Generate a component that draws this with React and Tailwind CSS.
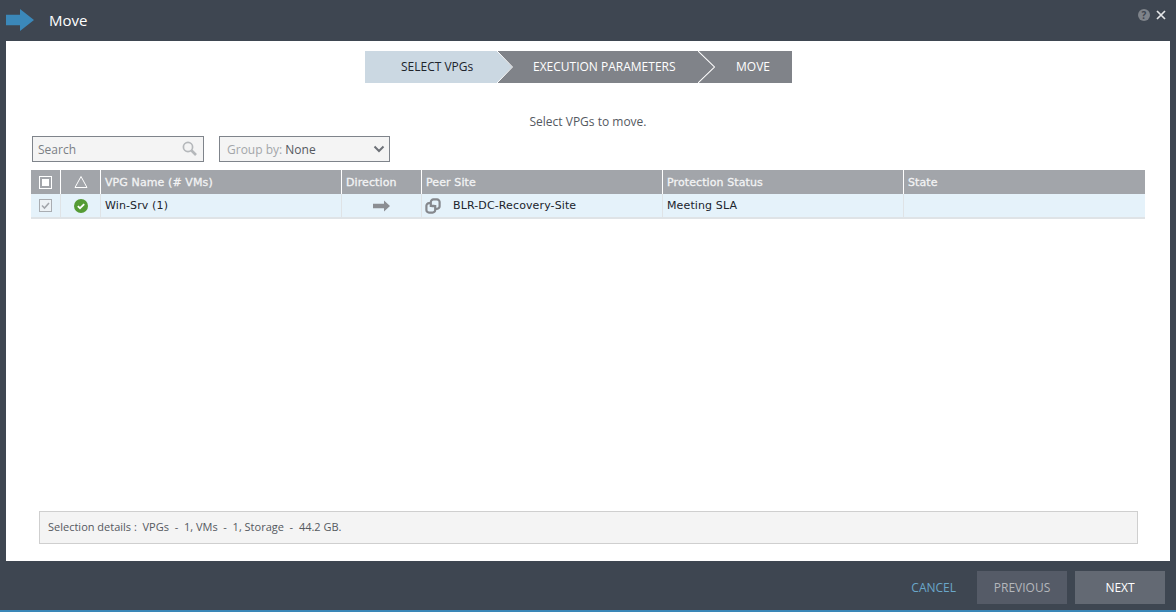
const headerCell = 'flex items-center border-l border-white pl-[4px] pt-[3px] text-[11px] tracking-[0.1px] text-[#f2f3f4] [-webkit-text-stroke:0.3px_#f2f3f4]'
const rowCell = 'flex items-center border-l border-[#dfe3e6] pl-[4px] pt-[2px] text-[11px] tracking-[0.12px] text-[#20242c]'
const columns = 'grid-cols-[29px_40px_241px_80px_241px_241px_242px]'

function StepChevron({ className, fill }) {
  return (
    <svg className={className} viewBox="0 0 16 32" preserveAspectRatio="none">
      {fill && <path d="M0 0L15 16L0 32Z" fill={fill} />}
      <path d="M0 0L15.5 16L0 32" fill="none" stroke="#fff" strokeWidth="1" />
    </svg>
  )
}

function Wizard() {
  return (
    <div className="ml-[359px] mt-[10px] flex h-8 w-[427px] font-['Open_Sans',sans-serif] text-xs">
      <div className="relative flex w-[132px] items-center bg-[#cbd8e2] pl-9 text-[#20242c]">
        SELECT VPGs
      </div>
      <div className="relative flex w-[201px] items-center bg-[#808389] pl-9 text-white">
        <StepChevron className="absolute left-0 top-0 h-8 w-4" fill="#cbd8e2" />
        EXECUTION PARAMETERS
      </div>
      <div className="relative flex flex-1 items-center bg-[#808389] pl-[38px] text-white">
        <StepChevron className="absolute left-0 top-0 h-8 w-[17px]" />
        MOVE
      </div>
    </div>
  )
}

function Toolbar() {
  return (
    <div className="ml-[26px] mt-[6px] flex gap-[15px] font-['Open_Sans',sans-serif] text-xs">
      <div className="flex h-[26px] w-[172px] items-center justify-between border border-[#7f848b] bg-[#f4f4f4] pl-[5px] pr-[6px] text-[#7b7f85]">
        <span className="pt-[1px]">Search</span>
        <svg className="mb-[2px] h-[15px] w-[15px]" viewBox="0 0 15 15">
          <circle cx="6" cy="6" r="4.6" fill="none" stroke="#b5b8bb" strokeWidth="1.7" />
          <path d="M9.5 9.5L14 14" fill="none" stroke="#b5b8bb" strokeWidth="2.6" />
        </svg>
      </div>
      <div className="flex h-[26px] w-[171px] items-center justify-between border border-[#7f848b] bg-[#f4f4f4] pl-[7px] pr-[4px] text-[#a3a6aa]">
        <span className="pt-[1px]">
          Group by: <span className="text-[#55595f]">None</span>
        </span>
        <svg className="h-2 w-3" viewBox="0 0 12 8">
          <path d="M1.5 1.5L6 6L10.5 1.5" fill="none" stroke="#6d7177" strokeWidth="2" />
        </svg>
      </div>
    </div>
  )
}

function VpgTable() {
  return (
    <div className="mx-[25px] mt-2 font-['DejaVu_Sans',sans-serif]">
      <div className={`grid h-6 bg-[#a2a5aa] ${columns}`}>
        <div className="flex items-center pl-2">
          <div className="flex h-[13px] w-[13px] items-center justify-center border-[1.5px] border-white">
            <div className="h-[7px] w-[7px] bg-white" />
          </div>
        </div>
        <div className="flex items-center justify-center border-l border-white">
          <svg className="h-[14px] w-[14px]" viewBox="0 0 14 14">
            <path d="M7 1.5L13 12.5H1Z" fill="none" stroke="#fff" strokeWidth="1" />
          </svg>
        </div>
        <div className={headerCell}>VPG Name (# VMs)</div>
        <div className={headerCell}>Direction</div>
        <div className={headerCell}>Peer Site</div>
        <div className={headerCell}>Protection Status</div>
        <div className={headerCell}>State</div>
      </div>
      <div className={`grid h-[25px] border-b-2 border-[#dfe3e6] bg-[#e5f2fa] ${columns}`}>
        <div className="flex items-center pl-2">
          <div className="flex h-[13px] w-[13px] items-center justify-center border border-[#a9adb2] bg-[#edf2f5]">
            <svg className="h-[9px] w-[9px]" viewBox="0 0 9 9">
              <path d="M1 4.5L3.5 7L8 2" fill="none" stroke="#a2a6ab" strokeWidth="1.6" />
            </svg>
          </div>
        </div>
        <div className="flex items-center justify-center border-l border-[#dfe3e6]">
          <svg className="h-[14px] w-[14px]" viewBox="0 0 14 14">
            <circle cx="7" cy="7" r="7" fill="#559b35" />
            <path d="M3.8 7.2L6 9.2L10.2 5.2" fill="none" stroke="#fff" strokeWidth="1.8" />
          </svg>
        </div>
        <div className={rowCell}>Win-Srv (1)</div>
        <div className={`${rowCell} justify-center pr-[4px]`}>
          <svg className="mb-[2px] h-3 w-[17px]" viewBox="0 0 17 12">
            <path d="M0 3.8H11V0.5L17 6L11 11.5V8.2H0Z" fill="#8b8e93" />
          </svg>
        </div>
        <div className={rowCell}>
          <svg className="mb-[1px] -ml-[1px] h-[16px] w-[16px]" viewBox="0 0 16 16">
            <path d="M6 5.2H4A2.6 2.6 0 0 0 1.4 7.8V12A2.6 2.6 0 0 0 4 14.6H7.6A2.6 2.6 0 0 0 10.2 12V8.2H6.6" fill="none" stroke="#85888d" strokeWidth="2.2" />
            <path d="M10 10.8H12A2.6 2.6 0 0 0 14.6 8.2V4A2.6 2.6 0 0 0 12 1.4H8.4A2.6 2.6 0 0 0 5.8 4V7.8H9.4" fill="none" stroke="#85888d" strokeWidth="2.2" />
          </svg>
          <span className="ml-[12px]">BLR-DC-Recovery-Site</span>
        </div>
        <div className={rowCell}>Meeting SLA</div>
        <div className={rowCell} />
      </div>
    </div>
  )
}

export default function App() {
  return (
    <div className="flex h-[612px] w-full flex-col border-b-2 border-[#3a87b8] bg-[#3e4651]">
      <header className="flex h-[41px] shrink-0 items-center pb-[1px] pl-[6px] pr-[8px]">
        <svg className="h-[22px] w-[28px]" viewBox="0 0 28 22">
          <path d="M0 5.7H14V0L28 11L14 22V16.3H0Z" fill="#3b88b9" />
        </svg>
        <h1 className="ml-[15px] font-['Open_Sans',sans-serif] text-[15px] text-white">Move</h1>
        <div className="mb-[10px] ml-auto flex items-center gap-[4px]">
          <div className="flex h-3 w-3 items-center justify-center rounded-full bg-[#7e838a] font-['Open_Sans',sans-serif] text-[10px] font-bold text-[#3e4651]">
            ?
          </div>
          <svg className="h-[14px] w-[14px]" viewBox="0 0 14 14">
            <path d="M3 3L11 11M11 3L3 11" fill="none" stroke="#e4e6e8" strokeWidth="1.7" />
          </svg>
        </div>
      </header>

      <main className="mx-[6px] flex min-h-0 flex-1 flex-col bg-white">
        <Wizard />
        <p className="mt-[31px] h-[16px] text-center font-['Open_Sans',sans-serif] text-xs leading-4 text-[#55595f]">
          Select VPGs to move.
        </p>
        <Toolbar />
        <VpgTable />
        <div className="mb-[17px] ml-[33px] mr-[32px] mt-auto flex h-[33px] items-center border border-[#cfcfcf] bg-[#f4f4f4] pl-2 font-['Open_Sans',sans-serif] text-[11px] text-[#55595f]">
          Selection details :&nbsp; VPGs &nbsp;-&nbsp; 1, VMs &nbsp;-&nbsp; 1, Storage &nbsp;-&nbsp; 44.2 GB.
        </div>
      </main>

      <footer className="flex h-[49px] shrink-0 items-start justify-end gap-2 pr-[11px] pt-[10px] font-['Open_Sans',sans-serif] text-xs">
        <button type="button" className="mr-[13px] h-[33px] text-[#6aa7c9]">CANCEL</button>
        <button type="button" className="h-[33px] w-[90px] bg-[#555b67] text-[#b4b7bc]">PREVIOUS</button>
        <button type="button" className="h-[33px] w-[90px] bg-[#636973] text-white">NEXT</button>
      </footer>
    </div>
  )
}
